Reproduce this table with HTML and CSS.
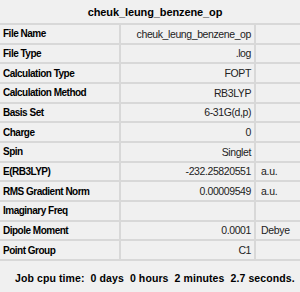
FILE: index.html
```html
<!DOCTYPE html>
<html>
<head>
<meta charset="utf-8">
<link rel="stylesheet" href="styles.css">
</head>
<body>
<div class="panel">
  <div class="title">cheuk_leung_benzene_op</div>
  <div class="grid">
    <div class="lbl">File Name</div><div class="val">cheuk_leung_benzene_op</div><div class="unit"></div>
    <div class="lbl">File Type</div><div class="val">.log</div><div class="unit"></div>
    <div class="lbl">Calculation Type</div><div class="val">FOPT</div><div class="unit"></div>
    <div class="lbl">Calculation Method</div><div class="val">RB3LYP</div><div class="unit"></div>
    <div class="lbl">Basis Set</div><div class="val">6-31G(d,p)</div><div class="unit"></div>
    <div class="lbl">Charge</div><div class="val">0</div><div class="unit"></div>
    <div class="lbl">Spin</div><div class="val">Singlet</div><div class="unit"></div>
    <div class="lbl">E(RB3LYP)</div><div class="val">-232.25820551</div><div class="unit">a.u.</div>
    <div class="lbl">RMS Gradient Norm</div><div class="val">0.00009549</div><div class="unit">a.u.</div>
    <div class="lbl">Imaginary Freq</div><div class="val"></div><div class="unit"></div>
    <div class="lbl">Dipole Moment</div><div class="val">0.0001</div><div class="unit">Debye</div>
    <div class="lbl">Point Group</div><div class="val">C1</div><div class="unit"></div>
  </div>
  <div class="cpu">Job cpu time:&nbsp; 0 days&nbsp; 0 hours&nbsp; 2 minutes&nbsp; 2.7 seconds.</div>
</div>
</body>
</html>
```
FILE: styles.css
```css
html, body {
  margin: 0;
  padding: 0;
  background: #f0f0f0;
}
body {
  width: 300px;
  height: 292px;
  overflow: hidden;
  font-family: "Liberation Sans", Arial, sans-serif;
  font-size: 11px;
  color: #000;
}
.title {
  height: 23px;
  line-height: 24px;
  text-align: center;
  font-weight: bold;
  font-size: 11px;
  letter-spacing: -0.1px;
  padding-left: 10px;
}
.grid {
  display: grid;
  grid-template-columns: 121px 135px 1fr;
  grid-auto-rows: 19.67px;
  border-top: 2px solid #d8d8d8;
}
.grid > div {
  box-sizing: border-box;
  border-bottom: 2px solid #d8d8d8;
  display: flex;
  align-items: center;
  white-space: nowrap;
  overflow: hidden;
}
.lbl {
  font-weight: bold;
  font-size: 10px;
  letter-spacing: -0.5px;
  padding-left: 3px;
  border-right: 2px solid #d8d8d8;
}
.val {
  justify-content: flex-end;
  padding-right: 3px;
  border-right: 2px solid #d8d8d8;
  color: #222;
  font-size: 10.5px;
  letter-spacing: -0.4px;
}
.unit {
  padding-left: 5px;
  color: #222;
  font-size: 10.5px;
  letter-spacing: -0.3px;
}
.cpu {
  padding-left: 15px;
  margin-top: 9px;
  font-weight: bold;
  font-size: 10.5px;
  letter-spacing: 0.1px;
  line-height: 16px;
  white-space: nowrap;
}
```
